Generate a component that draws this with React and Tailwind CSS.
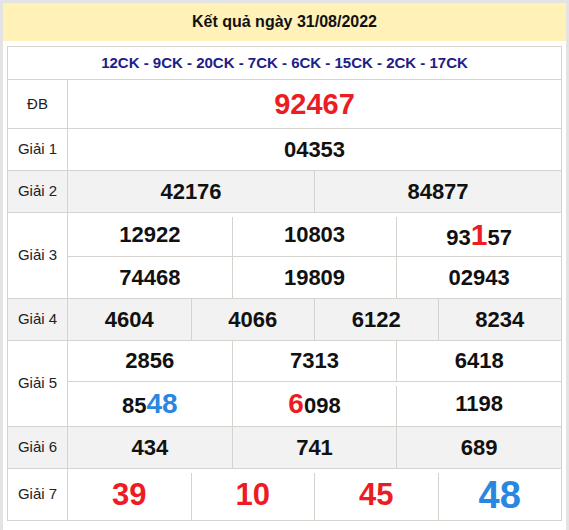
import React from 'react';

const LINE = 'border-[#d6d2ce]';
const RED = 'text-[#ed1c24]';
const BLUE = 'text-[#2a87e0]';

// cell whose left divider starts a few px below the row line
const GAP = 'bg-[linear-gradient(#d6d2ce,#d6d2ce)] bg-no-repeat bg-[length:1px_calc(100%-4px)] bg-[position:0_4px]';

function Num({ children, className = '' }) {
  return <span className={`text-[22px] font-bold text-[#111] leading-none ${className}`}>{children}</span>;
}

function Sub({ h, cells, gaps = [], line }) {
  return (
    <div className={`flex ${h} ${line ? `border-b ${LINE}` : ''}`}>
      {cells.map((c, i) => (
        <div key={i}
          className={`flex flex-1 items-center justify-center ${i > 0 ? (gaps.includes(i) ? `pl-px ${GAP}` : `border-l ${LINE}`) : ''}`}>
          {c}
        </div>
      ))}
    </div>
  );
}

function Row({ label, gray, last, children }) {
  return (
    <div className={`flex ${last ? '' : `border-b ${LINE}`} ${gray ? 'bg-[#f2f2f2]' : 'bg-white'}`}>
      <div className={`flex w-[60px] shrink-0 items-center justify-center border-r ${LINE} text-[15px] text-[#222]`}>
        {label}
      </div>
      <div className="flex min-w-0 flex-1 flex-col">{children}</div>
    </div>
  );
}

export default function App() {
  return (
    <div className="min-h-[530px] border-x-[3px] border-t-[3px] border-[#e3e3e3] bg-white font-['Liberation_Sans',Arial,sans-serif]">
      {/* Header */}
      <div className="flex h-[38px] items-center justify-center bg-[#fff1b8] text-[16px] font-bold text-[#111]">
        Kết quả ngày 31/08/2022
      </div>

      <div className="px-[4px] pt-[5px]">
        <div className={`border ${LINE}`}>
          {/* Codes */}
          <div className={`flex h-[33px] items-center justify-center border-b ${LINE} text-[15px] font-bold text-[#1d2089]`}>
            12CK - 9CK - 20CK - 7CK - 6CK - 15CK - 2CK - 17CK
          </div>

          <Row label="ĐB">
            <Sub h="h-[48px]" cells={[<span className={`text-[29px] font-bold leading-none ${RED}`}>92467</span>]} />
          </Row>

          <Row label="Giải 1">
            <Sub h="h-[41px]" cells={[<Num>04353</Num>]} />
          </Row>

          <Row label="Giải 2" gray>
            <Sub h="h-[41px]" cells={[<Num>42176</Num>, <Num>84877</Num>]} />
          </Row>

          <Row label="Giải 3">
            <Sub h="h-[44px]" line gaps={[1, 2]} cells={[
              <Num>12922</Num>,
              <Num>10803</Num>,
              <Num>93<span className={`text-[30px] ${RED}`}>1</span>57</Num>,
            ]} />
            <Sub h="h-[41px]" cells={[<Num>74468</Num>, <Num>19809</Num>, <Num>02943</Num>]} />
          </Row>

          <Row label="Giải 4" gray>
            <Sub h="h-[41px]" cells={[<Num>4604</Num>, <Num>4066</Num>, <Num>6122</Num>, <Num>8234</Num>]} />
          </Row>

          <Row label="Giải 5">
            <Sub h="h-[41px]" line cells={[<Num>2856</Num>, <Num>7313</Num>, <Num>6418</Num>]} />
            <Sub h="h-[44px]" gaps={[2]} cells={[
              <Num>85<span className={`text-[28px] ${BLUE}`}>48</span></Num>,
              <Num><span className={`text-[28px] ${RED}`}>6</span>098</Num>,
              <Num>1198</Num>,
            ]} />
          </Row>

          <Row label="Giải 6" gray>
            <Sub h="h-[41px]" cells={[<Num>434</Num>, <Num>741</Num>, <Num>689</Num>]} />
          </Row>

          <Row label="Giải 7" last>
            <Sub h="h-[51px]" gaps={[1, 2, 3]} cells={[
              <span className={`text-[31px] font-bold leading-none ${RED}`}>39</span>,
              <span className={`text-[31px] font-bold leading-none ${RED}`}>10</span>,
              <span className={`text-[31px] font-bold leading-none ${RED}`}>45</span>,
              <span className={`text-[38px] font-bold leading-none ${BLUE}`}>48</span>,
            ]} />
          </Row>
        </div>
      </div>
    </div>
  );
}
